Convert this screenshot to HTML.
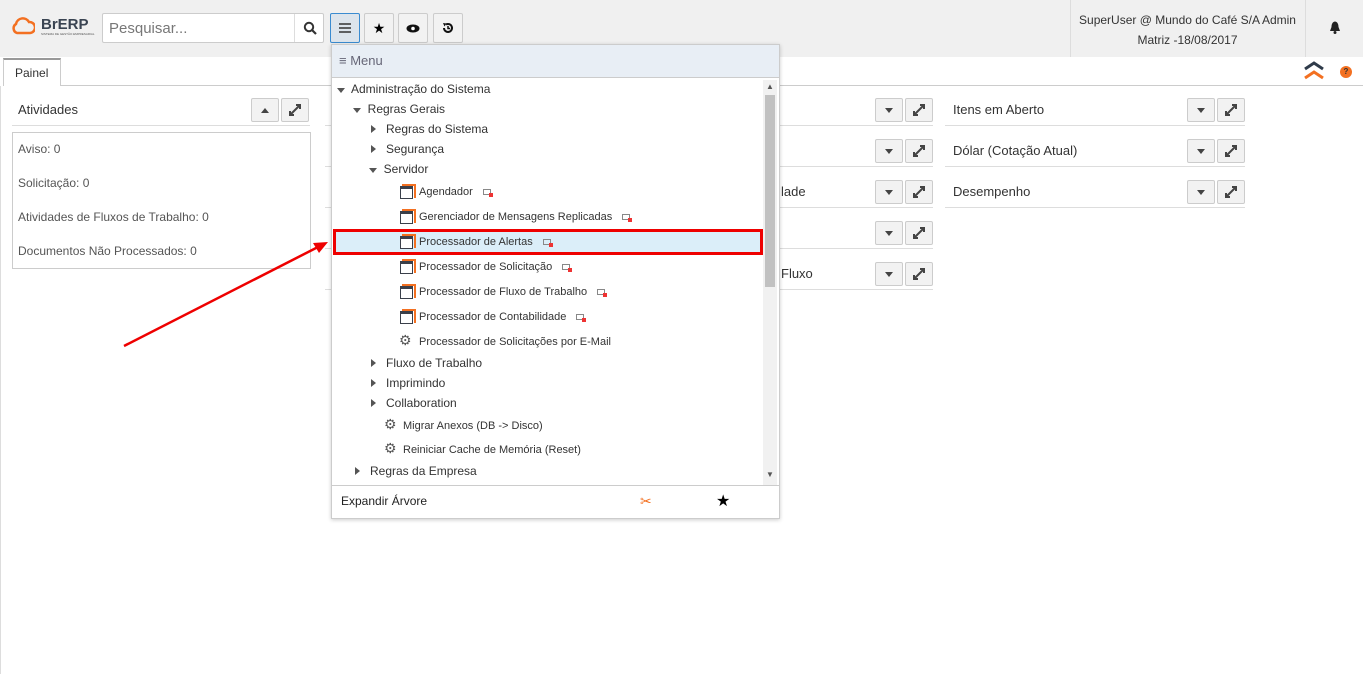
<!DOCTYPE html>
<html><head><meta charset="utf-8"><style>
*{box-sizing:border-box;margin:0;padding:0}
body{width:1363px;height:674px;position:relative;background:#fff;font-family:"Liberation Sans",sans-serif;font-size:13px;color:#333;overflow:hidden}
.a{position:absolute}
.btn{position:absolute;width:28px;height:24px;border:1px solid #ccc;background:#f2f2f2;border-radius:2px;display:flex;align-items:center;justify-content:center}
.line{position:absolute;height:1px;background:#ddd}
.t{position:absolute;white-space:nowrap}
.mi{position:absolute;white-space:nowrap;font-size:12px;color:#333}
.ic{position:absolute;width:13px;height:13px;border:1.5px solid #3a3f4a;border-top-width:3px;background:#fff}
.ic:after{content:"";position:absolute;right:-4px;top:-5px;width:12px;height:12px;border-top:2px solid #f37021;border-right:2px solid #f37021}
.lk{display:inline-block;width:8px;height:6px;border:1px solid #888;margin-left:10px;position:relative;vertical-align:middle}
.lk:after{content:"";position:absolute;right:-3px;bottom:-3px;width:4px;height:4px;background:#e33}
.tri-r{display:inline-block;border-left:5px solid #555;border-top:4px solid transparent;border-bottom:4px solid transparent}
.tri-d{display:inline-block;border-top:5px solid #555;border-left:4px solid transparent;border-right:4px solid transparent}
.gear{position:absolute;font-size:14px;color:#555}
</style></head><body>
<div class="a" style="left:0;top:0;width:1363px;height:57px;background:#f0f0f0"></div>
<svg class="a" style="left:11px;top:15px" width="24" height="22" viewBox="0 0 24 22"><path d="M6 18 A5 5 0 0 1 5 9 A7 7 0 0 1 18 7 A5 5 0 0 1 19 18 Z" fill="none" stroke="#f37021" stroke-width="2.5"/></svg>
<div class="t" style="left:41px;top:16px;font-weight:bold;font-size:15px;color:#3a4452">BrERP</div>
<div class="t" style="left:41px;top:32px;font-size:3px;color:#555">SISTEMA DE GESTÃO EMPRESARIAL</div>
<div class="a" style="left:102px;top:13px;width:222px;height:30px;border:1px solid #ccc;background:#fff;border-radius:2px"></div>
<div class="t" style="left:109px;top:20px;font-size:15px;color:#777">Pesquisar...</div>
<div class="a" style="left:294px;top:14px;width:1px;height:28px;background:#ddd"></div>
<svg class="a" style="left:303px;top:21px" width="14" height="14"><circle cx="6" cy="6" r="4.2" fill="none" stroke="#333" stroke-width="2"/><path d="M9 9 L13 13" stroke="#333" stroke-width="2.2"/></svg>
<div class="btn" style="left:330px;top:13px;width:30px;height:30px;border-color:#3a8bd0;background:#dce4ec"><svg width="12" height="10"><path d="M0 1h12M0 5h12M0 9h12" stroke="#333" stroke-width="1.6"/></svg></div>
<div class="btn" style="left:364px;top:13px;width:30px;height:30px"><span style="font-size:14px;color:#000">★</span></div>
<div class="btn" style="left:398px;top:13px;width:30px;height:30px"><svg width="14" height="9"><ellipse cx="7" cy="4.5" rx="6.5" ry="4" fill="#111"/><circle cx="7" cy="4.5" r="1.8" fill="#fff"/></svg></div>
<div class="btn" style="left:433px;top:13px;width:30px;height:30px"><svg width="12" height="12"><path d="M2 6 A4 4 0 1 0 4 2.5" fill="none" stroke="#111" stroke-width="2"/><path d="M1 1 L4.5 1.5 L2.5 4.5Z" fill="#111"/><path d="M6 4v2.5h2" fill="none" stroke="#111" stroke-width="1.5"/></svg></div>
<div class="a" style="left:1070px;top:0;width:1px;height:57px;background:#ddd"></div>
<div class="a" style="left:1305px;top:0;width:1px;height:57px;background:#ddd"></div>
<div class="t" style="left:1070px;top:10px;width:235px;text-align:center;font-size:12px;color:#333;line-height:20px">SuperUser @ Mundo do Café S/A Admin<br>Matriz -18/08/2017</div>
<svg class="a" style="left:1329px;top:21px" width="12" height="13"><path d="M6 0.5 C3 1 2.5 4 2.5 6 L1 10 H11 L9.5 6 C9.5 4 9 1 6 0.5Z" fill="#222"/><circle cx="6" cy="11.5" r="1.5" fill="#222"/></svg>
<div class="a" style="left:3px;top:58px;width:58px;height:28px;border:1px solid #ccc;border-top:2px solid #999;border-bottom:none;background:#fff"></div>
<div class="t" style="left:15px;top:66px;font-size:12px">Painel</div>
<div class="line" style="left:61px;top:85px;width:1302px;background:#ccc"></div>
<svg class="a" style="left:1302px;top:61px" width="24" height="20"><path d="M3 8 L12 2 L21 8" fill="none" stroke="#2f3b4a" stroke-width="3"/><path d="M3 17 L12 11 L21 17" fill="none" stroke="#f37021" stroke-width="3"/></svg>
<div class="a" style="left:1340px;top:66px;width:12px;height:12px;border-radius:50%;background:#f37021;color:#333;font-size:8px;font-weight:bold;text-align:center;line-height:12px">?</div>
<div class="a" style="left:0;top:86px;width:1px;height:588px;background:#ddd"></div>
<div class="t" style="left:18px;top:102px;font-size:13px">Atividades</div>
<div class="btn" style="left:251px;top:98px"><span class="tri-d" style="transform:rotate(180deg);border-top-color:#444"></span></div>
<div class="btn" style="left:281px;top:98px"><svg width="14" height="14"><path d="M2 12 L12 2 M8 2h4v4 M2 8v4h4" fill="none" stroke="#444" stroke-width="2"/></svg></div>
<div class="line" style="left:12px;top:125px;width:298px"></div>
<div class="a" style="left:12px;top:132px;width:299px;height:137px;border:1px solid #ccc"></div>
<div class="t" style="left:18px;top:142px;font-size:12px;color:#555">Aviso: 0</div>
<div class="t" style="left:18px;top:176px;font-size:12px;color:#555">Solicitação: 0</div>
<div class="t" style="left:18px;top:210px;font-size:12px;color:#555">Atividades de Fluxos de Trabalho: 0</div>
<div class="t" style="left:18px;top:244px;font-size:12px;color:#555">Documentos Não Processados: 0</div>
<div id="mid"></div>
<div class="t" style="left:781px;top:184px">lade</div>
<div class="t" style="left:781px;top:266px">Fluxo</div>
<div class="t" style="left:953px;top:102px">Itens em Aberto</div>
<div class="t" style="left:953px;top:143px">Dólar (Cotação Atual)</div>
<div class="t" style="left:953px;top:184px">Desempenho</div>
<script>
var h='';
function row(x,y,lx,lw){h+='<div class="btn" style="left:'+x+'px;top:'+(y-11)+'px"><span class="tri-d" style="border-top-color:#444"></span></div><div class="btn" style="left:'+(x+30)+'px;top:'+(y-11)+'px"><svg width="14" height="14"><path d="M2 12 L12 2 M8 2h4v4 M2 8v4h4" fill="none" stroke="#444" stroke-width="2"/></svg></div><div class="line" style="left:'+lx+'px;top:'+(y+16)+'px;width:'+lw+'px"></div>';}
[109,150,191,232,273].forEach(function(y){row(875,y,325,608)});
[109,150,191].forEach(function(y){row(1187,y,945,300)});
document.getElementById('mid').outerHTML=h;
</script>
<div class="a" style="left:331px;top:44px;width:449px;height:475px;background:#fff;border:1px solid #ccc;box-shadow:0 1px 4px rgba(0,0,0,.2)"></div>
<div class="a" style="left:332px;top:45px;width:447px;height:33px;background:#e8eef5;border-bottom:1px solid #ccc"></div>
<div class="t" style="left:339px;top:53px;font-size:13px;color:#667">≡ Menu</div>
<div class="a" style="left:763px;top:80px;width:14px;height:405px;background:#f1f1f1"></div>
<div class="a" style="left:765px;top:95px;width:10px;height:192px;background:#c1c1c1"></div>
<div class="t" style="left:766px;top:470px;font-size:8px;color:#555">▼</div>
<div class="t" style="left:766px;top:82px;font-size:8px;color:#555">▲</div>
<div class="line" style="left:332px;top:485px;width:447px;background:#ccc"></div>
<div class="t" style="left:341px;top:494px;font-size:12px;color:#222">Expandir Árvore</div>
<div class="t" style="left:640px;top:493px;font-size:14px;color:#f37021">✂</div>
<div class="t" style="left:716px;top:491px;font-size:16px;color:#000">★</div>
<div class="a" style="left:333px;top:229px;width:430px;height:26px;background:#dbeef9;border:3px solid #e00"></div>
<div class="mi" style="left:337px;top:82px;font-size:12px"><span class="tri-d"></span>&nbsp; Administração do Sistema</div>
<div class="mi" style="left:353px;top:102px"><span class="tri-d"></span>&nbsp; Regras Gerais</div>
<div class="mi" style="left:371px;top:122px"><span class="tri-r"></span>&nbsp;&nbsp; Regras do Sistema</div>
<div class="mi" style="left:371px;top:142px"><span class="tri-r"></span>&nbsp;&nbsp; Segurança</div>
<div class="mi" style="left:369px;top:162px"><span class="tri-d"></span>&nbsp; Servidor</div>
<div class="ic" style="left:400px;top:186px"></div><div class="mi" style="left:419px;top:186px;font-size:11px">Agendador<span class="lk"></span></div>
<div class="ic" style="left:400px;top:211px"></div><div class="mi" style="left:419px;top:211px;font-size:11px">Gerenciador de Mensagens Replicadas<span class="lk"></span></div>
<div class="ic" style="left:400px;top:236px"></div><div class="mi" style="left:419px;top:236px;font-size:11px">Processador de Alertas<span class="lk"></span></div>
<div class="ic" style="left:400px;top:261px"></div><div class="mi" style="left:419px;top:261px;font-size:11px">Processador de Solicitação<span class="lk"></span></div>
<div class="ic" style="left:400px;top:286px"></div><div class="mi" style="left:419px;top:286px;font-size:11px">Processador de Fluxo de Trabalho<span class="lk"></span></div>
<div class="ic" style="left:400px;top:311px"></div><div class="mi" style="left:419px;top:311px;font-size:11px">Processador de Contabilidade<span class="lk"></span></div>
<div class="gear" style="left:399px;top:332px">⚙</div><div class="mi" style="left:419px;top:336px;font-size:11px">Processador de Solicitações por E-Mail</div>
<div class="mi" style="left:371px;top:356px"><span class="tri-r"></span>&nbsp;&nbsp; Fluxo de Trabalho</div>
<div class="mi" style="left:371px;top:376px"><span class="tri-r"></span>&nbsp;&nbsp; Imprimindo</div>
<div class="mi" style="left:371px;top:396px"><span class="tri-r"></span>&nbsp;&nbsp; Collaboration</div>
<div class="gear" style="left:384px;top:416px">⚙</div><div class="mi" style="left:403px;top:420px;font-size:11px">Migrar Anexos (DB -&gt; Disco)</div>
<div class="gear" style="left:384px;top:440px">⚙</div><div class="mi" style="left:403px;top:444px;font-size:11px">Reiniciar Cache de Memória (Reset)</div>
<div class="mi" style="left:355px;top:464px"><span class="tri-r"></span>&nbsp;&nbsp; Regras da Empresa</div>
<svg class="a" style="left:0;top:0" width="1363" height="674" pointer-events="none"><path d="M124 346 L318 247" stroke="#e00" stroke-width="2.5"/><path d="M328 242 L313 243 L319 253Z" fill="#e00"/></svg>
</body></html>
